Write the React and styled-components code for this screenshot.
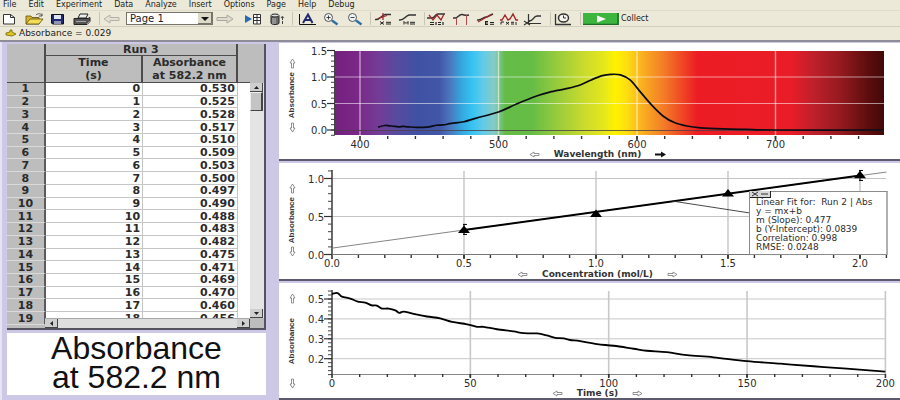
import { useState } from "react";
import styled, { createGlobalStyle } from "styled-components";

const GlobalStyle = createGlobalStyle`
  * {
    box-sizing: border-box;
  }
  body {
    margin: 0;
    background: #cdc8e6;
    color: #1c1c1c;
    font-family: "DejaVu Sans", Verdana, sans-serif;
  }
  button {
    padding: 0;
    border: 0;
    background: none;
    color: inherit;
    font: inherit;
  }
`;

const Page = styled.div`
  overflow: hidden;
`;

const MenuBar = styled.nav`
  display: flex;
  gap: 12px;
  height: 10px;
  padding-left: 3px;
  background: #ece9d8;
  font-size: 8px;
`;

const MenuItem = styled.button`
  height: 9px;
  line-height: 9px;
`;

const ToolBar = styled.div`
  display: flex;
  align-items: center;
  height: 17px;
  background: #ece9d8;
  border-top: 1px solid #dedbca;
  border-bottom: 1px solid #d2cfbf;
`;

const ToolButton = styled.button`
  width: 24px;
  height: 14px;

  svg {
    display: block;
  }
`;

const Separator = styled.span`
  width: 6px;
  height: 13px;
  background: linear-gradient(#c9c5b4, #c9c5b4) center / 1px 100% no-repeat;
`;

const PageSelect = styled.select`
  width: 87px;
  height: 13px;
  padding: 0 0 0 3px;
  border: 1px solid #77756b;
  border-radius: 0;
  background: #fff;
  color: #1c1c1c;
  font-family: inherit;
  font-size: 10px;
  line-height: 11px;
  appearance: none;
`;

const SelectWrap = styled.label`
  display: flex;
  position: relative;

  svg {
    position: absolute;
    top: 1px;
    right: 1px;
    pointer-events: none;
  }
`;

const Spacer = styled.span`
  width: 4px;
`;

const CollectButton = styled.button`
  display: flex;
  align-items: center;
  gap: 2px;
  font-size: 8px;
`;

const StatusBar = styled.div`
  display: flex;
  align-items: center;
  gap: 2px;
  height: 15px;
  padding: 0 5px 2px;
  background: #ece9d8;
  border-bottom: 2px solid #8e8c98;
  font-size: 9px;
  line-height: 12px;
`;

const Workspace = styled.main`
  display: grid;
  grid-template-columns: 31fr 69fr;
`;

const Side = styled.section`
  display: flex;
  flex-direction: column;
  gap: 3px;
  padding: 2px 13px 5px 5px;
  border-left: 2px solid #e6e3f3;
`;

const TableFrame = styled.div`
  display: grid;
  grid-template-columns: 1fr 14px;
  position: relative;
  height: 286px;
  overflow: hidden;
  background: #bdbdbd;
  border-right: 2px solid #55535f;
  border-bottom: 2px solid #55535f;
`;

const DataTable = styled.table`
  width: 100%;
  height: 281px;
  table-layout: fixed;
  border-collapse: separate;
  border-spacing: 0;
  font-size: 11px;
  font-weight: bold;
  line-height: 11px;
  color: #2b2b2b;
`;

const HeadCell = styled.th`
  padding: 0;
  border-right: ${(props) => (props.$open ? "0" : "2px solid #4c4c4c")};
  border-bottom: 1px solid #4c4c4c;
  line-height: ${(props) => (props.$tall ? 13 : 11)}px;
  vertical-align: middle;
`;

const RowHead = styled.th`
  padding: 0;
  border-right: 2px solid #5c5c5c;
  border-bottom: 1px solid #dadada;
`;

const Cell = styled.td`
  padding: 0 2px 0 0;
  background: #fff;
  border-right: 1px solid ${(props) => (props.$blank ? "#fff" : "#c6c6c6")};
  border-bottom: 1px solid ${(props) => (props.$blank ? "#fff" : "#c6c6c6")};
  text-align: right;
`;

const VerticalBar = styled.div`
  display: flex;
  flex-direction: column;
  margin: 39px 0 10px;
  background: #e4e4e4;
`;

const HorizontalBar = styled.div`
  display: flex;
  justify-content: space-between;
  position: absolute;
  right: 14px;
  bottom: 0;
  left: 38px;
  height: 10px;
  background: #dedede;
  border-top: 1px solid #a8a8a8;
`;

const ScrollButton = styled.button`
  display: grid;
  place-items: center;
  width: 13px;
  height: 9px;
  background: #cfcfcf;
  border-right: 1px solid #444;
  border-bottom: 1px solid #444;
`;

const Thumb = styled.div`
  width: 13px;
  height: 19px;
  margin-bottom: auto;
  background: #c4c4c4;
  border: 1px solid #efefef;
  border-right: 2px solid #444;
  border-bottom: 1px solid #444;
`;

const Readout = styled.div`
  padding: 1px 0 3px;
  background: #fff;
  color: #111;
  font-family: "Liberation Sans", Arial, sans-serif;
  font-size: 32px;
  line-height: 29px;
  text-align: center;
`;

const Charts = styled.section`
  display: flex;
  flex-direction: column;
  gap: 2px;
  padding-top: 1px;
`;

const ChartPanel = styled.figure`
  display: grid;
  grid-template-columns: 26px 1fr;
  position: relative;
  margin: 0;
  background: #fff;
  border-bottom: 2px solid #5d5a70;
`;

const YAxis = styled.div`
  display: flex;
  flex-direction: column;
  align-items: center;
  justify-content: space-between;
  grid-row: 1 / 3;
  padding: ${(props) => props.$top}px 0 ${(props) => props.$bottom}px;
`;

const YTitle = styled.span`
  color: #333;
  font-family: "Liberation Sans", Arial, sans-serif;
  font-size: 8px;
  font-weight: bold;
  line-height: 10px;
  writing-mode: vertical-rl;
  rotate: 180deg;
`;

const XTitle = styled.figcaption`
  display: flex;
  align-items: center;
  justify-content: center;
  gap: 14px;
  grid-column: 2;
  height: 10px;
  padding-right: 10px;
  color: #333;
  font-size: 9px;
  font-weight: bold;
  line-height: 10px;
`;

const ArrowButton = styled.button`
  display: block;

  svg {
    display: block;
    rotate: ${(props) => props.$turn || 0}deg;
  }
`;

const Plot = styled.svg`
  display: block;
  width: 100%;
  height: auto;
  overflow: visible;
  font-size: 10px;
  fill: #2c2c2c;
`;

const FitBox = styled.div`
  position: absolute;
  top: 28px;
  right: 12px;
  width: 139px;
  padding: 6px 0 2px 6px;
  background: #fff;
  border: 1px solid #8b8b8b;
  border-right: 2px solid #b0b0b0;
  color: #2c2c2c;
  font-size: 9px;
  line-height: 9px;
  white-space: pre;
`;

const FitButtons = styled.div`
  display: flex;
  position: absolute;
  top: -1px;
  left: 0;
  background: #d8d8d8;
  border-right: 1px solid #222;
  border-bottom: 1px solid #222;

  button {
    width: 10px;
    height: 6px;
  }
  svg {
    display: block;
  }
`;

const menus = ["File", "Edit", "Experiment", "Data", "Analyze", "Insert", "Options", "Page", "Help", "Debug"];

const absorbances = [
  "0.530", "0.525", "0.528", "0.517", "0.510", "0.509", "0.503", "0.500", "0.497", "0.490",
  "0.488", "0.483", "0.482", "0.475", "0.471", "0.469", "0.470", "0.460", "0.456",
];

const spectrum = [
  [413, 0.055], [418, 0.085], [423, 0.075], [428, 0.06], [431, 0.07], [435, 0.06], [441, 0.05],
  [450, 0.06], [455, 0.09], [460, 0.095], [466, 0.125], [475, 0.155], [484, 0.225], [500, 0.34],
  [513, 0.49], [528, 0.645], [537, 0.715], [550, 0.785], [559, 0.85], [567, 0.945], [575, 1.025],
  [581, 1.05], [588, 1.04], [595, 0.945], [603, 0.7], [611, 0.46], [619, 0.26], [627, 0.14],
  [636, 0.075], [646, 0.04], [662, 0.02], [679, 0.01], [700, 0], [778, 0],
];

const decay = [
  [0, 0.525], [2, 0.53], [3.6, 0.512], [6.6, 0.502], [9.3, 0.487], [12, 0.482], [14.4, 0.468],
  [16.2, 0.467], [18.1, 0.452], [20.5, 0.452], [22.9, 0.443], [24.3, 0.43], [25.9, 0.437],
  [29.5, 0.425], [34.3, 0.412], [39.1, 0.403], [43.4, 0.385], [48.8, 0.373], [52.4, 0.36],
  [54.8, 0.36], [59.6, 0.348], [65.6, 0.337], [69.3, 0.328], [74.1, 0.327], [77.7, 0.317],
  [80.7, 0.305], [83.7, 0.302], [86, 0.294], [89.7, 0.288], [95.8, 0.273], [101.8, 0.265],
  [109, 0.25], [113.8, 0.24], [121, 0.233], [128.3, 0.218], [137.9, 0.207], [150, 0.188],
  [162, 0.175], [174, 0.162], [186, 0.15], [200, 0.135],
];

// [offset %, colour] from 380 nm to 780 nm
const rainbow = [
  [0, "#74207f"], [4, "#7b2787"], [8, "#733c97"], [11, "#5a4a9f"], [15, "#3f51a4"], [19, "#4256a7"],
  [21, "#4b78bf"], [23, "#35a6df"], [25, "#35c3f2"], [27, "#62cae8"], [29, "#86cbc4"],
  [30, "#79c487"], [31, "#64bb46"], [36, "#66bd45"], [40, "#93ca3d"], [45, "#c6da2d"],
  [49, "#e6e71c"], [51, "#fff200"], [53, "#fde00f"], [56, "#f9b021"], [60, "#f37a26"],
  [64, "#ee3b24"], [66, "#ed1c24"], [83, "#e91d27"], [87, "#c0202b"], [92, "#961a20"],
  [97, "#5e0d0e"], [100, "#420808"],
];

// Catmull-Rom through every point
function curve(points) {
  let d = `M${points[0][0]} ${points[0][1]}`;
  for (let i = 0; i < points.length - 1; i++) {
    const p0 = points[i - 1] || points[i];
    const p1 = points[i];
    const p2 = points[i + 1];
    const p3 = points[i + 2] || p2;
    d += ` C${p1[0] + (p2[0] - p0[0]) / 6} ${p1[1] + (p2[1] - p0[1]) / 6}`;
    d += ` ${p2[0] - (p3[0] - p1[0]) / 6} ${p2[1] - (p3[1] - p1[1]) / 6} ${p2[0]} ${p2[1]}`;
  }
  return d;
}

function Arrow({ turn, solid, label }) {
  return (
    <ArrowButton $turn={turn} aria-label={label}>
      <svg width="11" height="7" viewBox="0 0 11 7">
        <path
          d={solid ? "M0 2.5h6V.5l5 3-5 3v-2H0z" : "M1 2.5h5V1l4 2.5L6 6V4.5H1z"}
          fill={solid ? "#111" : "#fff"}
          stroke={solid ? "none" : "#777"}
          strokeWidth="0.8"
        />
      </svg>
    </ArrowButton>
  );
}

function AxisY({ top, bottom }) {
  return (
    <YAxis $top={top} $bottom={bottom}>
      <Arrow turn={-90} label="Scale absorbance up" />
      <YTitle>Absorbance</YTitle>
      <Arrow turn={90} label="Scale absorbance down" />
    </YAxis>
  );
}

function AxisX({ title, solid }) {
  return (
    <XTitle>
      <Arrow turn={180} label={`Shrink ${title}`} />
      {title}
      <Arrow solid={solid} label={`Stretch ${title}`} />
    </XTitle>
  );
}

function Ticks({ x, y, left, base, xs, ys, minorX, minorY, digitsX, digitsY, labelY }) {
  return (
    <g>
      {minorX.map((v) => (
        <path key={v} d={`M${x(v)} ${base}v3`} stroke="#333" strokeWidth="1.4" />
      ))}
      {minorY.map((v) => (
        <path key={v} d={`M${left} ${y(v)}h-4`} stroke="#444" strokeWidth="1" />
      ))}
      {xs.map((v) => (
        <g key={v}>
          <path d={`M${x(v)} ${base}v4`} stroke="#333" strokeWidth="1.6" />
          <text x={x(v)} y={labelY} textAnchor="middle">{v.toFixed(digitsX)}</text>
        </g>
      ))}
      {ys.map((v) => (
        <g key={v}>
          <path d={`M${left} ${y(v)}h-8`} stroke="#333" strokeWidth="1.2" />
          <text x={left - 8} y={y(v) + 4} textAnchor="end">{v.toFixed(digitsY)}</text>
        </g>
      ))}
    </g>
  );
}

function range(from, to, step) {
  const out = [];
  for (let v = from; v <= to + step / 100; v += step) out.push(Number(v.toFixed(4)));
  return out;
}

function SpectrumChart() {
  const x = (v) => 55 + (v - 400) * 1.385;
  const y = (v) => 87 - v * 53;
  return (
    <ChartPanel>
      <AxisY top={17} bottom={28} />
      <Plot viewBox="0 0 595 106" role="img" aria-label="Absorbance against wavelength">
        <defs>
          <linearGradient id="rainbow">
            {rainbow.map(([at, color]) => (
              <stop key={at} offset={`${at}%`} stopColor={color} />
            ))}
          </linearGradient>
        </defs>
        <rect x="30" y="8" width="549" height="84" fill="url(#rainbow)" />
        <g stroke="#fff" strokeOpacity="0.55">
          {[400, 500, 600, 700].map((v) => (
            <path key={v} d={`M${x(v)} 8V92`} strokeWidth="1.4" />
          ))}
          {[0.5, 1].map((v) => (
            <path key={v} d={`M30 ${y(v)}H579`} />
          ))}
        </g>
        <path d="M30 87.500H579" stroke="#4d4048" strokeWidth="0.8" />
        <path d="M29.500 8V92" stroke="#444" />
        <Ticks
          x={x} y={y} left={30} base={93} labelY={105} digitsX={0} digitsY={1}
          xs={[400, 500, 600, 700]} ys={[0, 0.5, 1, 1.5]}
          minorX={range(420, 760, 20)} minorY={range(-0.1, 1.4, 0.1)}
        />
        <path d={curve(spectrum.map(([a, b]) => [x(a), y(b)]))} fill="none" stroke="#0b0b14" strokeWidth="1.7" />
      </Plot>
      <AxisX title="Wavelength (nm)" solid />
    </ChartPanel>
  );
}

function ConcentrationChart() {
  const x = (v) => 27 + v * 264;
  const y = (v) => 91.5 - v * 76;
  return (
    <ChartPanel>
      <AxisY top={22} bottom={24} />
      <Plot viewBox="0 0 595 106" role="img" aria-label="Absorbance against concentration">
        <g stroke="#c4c4c4">
          {[0.5, 1, 1.5, 2].map((v) => (
            <path key={v} d={`M${x(v)} 8V91`} strokeWidth="1.4" />
          ))}
          {[0.5, 1].map((v) => (
            <path key={v} d={`M27 ${y(v)}H581`} />
          ))}
        </g>
        <path d="M27 7V92" stroke="#444" strokeWidth="1.6" />
        <path d="M27 91.500H581" stroke="#777" />
        <Ticks
          x={x} y={y} left={27} base={92} labelY={104} digitsX={1} digitsY={1}
          xs={[0, 0.5, 1, 1.5, 2]} ys={[0, 0.5, 1]}
          minorX={range(0.1, 2.1, 0.1)} minorY={range(0.1, 1.1, 0.1)}
        />
        <path d={`M${x(0)} ${y(0.084)}L${x(2.1)} ${y(1.085)}`} stroke="#777" strokeWidth="0.9" />
        <path d={`M${x(0.5)} ${y(0.322)}L${x(2)} ${y(1.04)}`} stroke="#000" strokeWidth="2" />
        <path d="M367 38L445 50" stroke="#333" strokeWidth="0.9" />
        {[[0.5, 0.33], [1, 0.54], [1.5, 0.81], [2, 1.05]].map(([a, b]) => (
          <path key={a} d={`M${x(a)} ${y(b) - 4}l6 7.500h-12z`} fill="#000" />
        ))}
        {[[0.5, 0.33], [2, 1.04]].map(([a, b]) => (
          <path key={a} d={`M${x(a) - 1} ${y(b) - 5}h4m-3 0v10m-1 0h4`} stroke="#000" fill="none" />
        ))}
      </Plot>
      <AxisX title="Concentration (mol/L)" />
      <FitBox>
        <FitButtons>
          <button aria-label="Close fit box">
            <svg width="10" height="6" viewBox="0 0 10 6">
              <path d="M2 1l6 4M8 1L2 5" stroke="#333" />
            </svg>
          </button>
          <button aria-label="Collapse fit box">
            <svg width="10" height="6" viewBox="0 0 10 6">
              <path d="M1 3h7" stroke="#333" />
            </svg>
          </button>
        </FitButtons>
        <div>Linear Fit for:  Run 2 | Abs</div>
        <div>y = mx+b</div>
        <div>m (Slope): 0.477</div>
        <div>b (Y-Intercept): 0.0839</div>
        <div>Correlation: 0.998</div>
        <div>RMSE: 0.0248</div>
      </FitBox>
    </ChartPanel>
  );
}

function TimeChart() {
  const x = (v) => 27 + v * 2.767;
  const y = (v) => 16 + (0.5 - v) * 199;
  return (
    <ChartPanel>
      <AxisY top={12} bottom={11} />
      <Plot viewBox="0 0 595 105" role="img" aria-label="Absorbance against time">
        <g stroke="#c8c8c8">
          {[50, 100, 150, 200].map((v) => (
            <path key={v} d={`M${x(v)} 8V91`} strokeWidth="1.6" />
          ))}
          {[0.2, 0.3, 0.4, 0.5].map((v) => (
            <path key={v} d={`M27 ${y(v)}H581`} />
          ))}
        </g>
        <path d="M27 7V92" stroke="#444" strokeWidth="1.6" />
        <path d="M27 91.500H581" stroke="#888" />
        <Ticks
          x={x} y={y} left={27} base={91} labelY={104} digitsX={0} digitsY={1}
          xs={[0, 50, 100, 150, 200]} ys={[0.2, 0.3, 0.4, 0.5]}
          minorX={range(10, 190, 10)} minorY={range(0.12, 0.54, 0.02)}
        />
        <path d={curve(decay.map(([a, b]) => [x(a), y(b)]))} fill="none" stroke="#000" strokeWidth="1.8" />
      </Plot>
      <AxisX title="Time (s)" />
    </ChartPanel>
  );
}

// every toolbar drawing lives on a 24 x 14 canvas
const icons = {
  new: (
    <g stroke="#333">
      <path d="M3.500 2.500h7l4 3v6.500h-11z" fill="#fff" />
      <path d="M10.500 2.500v3h4" fill="none" />
    </g>
  ),
  open: (
    <g stroke="#5a4d12" strokeWidth="0.8">
      <path d="M2 12V4h5l1 1.500h7V12z" fill="#d8b52c" />
      <path d="M2 12l4-5h13l-4 5z" fill="#f4dc55" />
      <path d="M12 3c2-2 5-1.500 6 .5m0-2v2.500h-3" fill="none" stroke="#333" />
    </g>
  ),
  save: (
    <g>
      <path d="M3.500 2.500h12v9.500h-11l-1-1z" fill="#20286f" stroke="#111" />
      <path d="M6 3h7v4H6z" fill="#dfe3f3" />
      <path d="M6 9h7v3H6z" fill="#9095b5" />
    </g>
  ),
  print: (
    <g stroke="#222">
      <path d="M6 6l2-4h8l-2 4z" fill="#eee" />
      <path d="M2 6.500h14l2-1v4l-3 3H2z" fill="#555" />
      <path d="M4 9.500h10M15 12l3-3" stroke="#bbb" strokeWidth="0.8" />
    </g>
  ),
  back: <path d="M2 7l6-4v2.500h9v3H8V11z" fill="#e3e1d6" stroke="#b3b0a5" />,
  forward: <path d="M20 7l-6-4v2.500H4v3h10V11z" fill="#dedcd1" stroke="#aaa79c" />,
  table: (
    <g>
      <path d="M4 3l7 4-7 4z" fill="#2a6bb0" />
      <path d="M12.500 2.500h7v9.500h-7zM12.500 5.500h7M12.500 8.500h7M16 2.500v9.500" fill="#fff" stroke="#333" />
    </g>
  ),
  store: (
    <g>
      <path d="M6 4v7c0 2 8 2 8 0V4z" fill="#6d6d6d" stroke="#222" />
      <ellipse cx="10" cy="3.500" rx="4" ry="1.500" fill="#ddd" stroke="#222" />
      <path d="M8 6v6M10 6v6" stroke="#ccc" strokeWidth="0.8" />
      <path d="M17.500 12V4m-1.500 2l1.500-2L19 6" fill="none" stroke="#444" strokeDasharray="3 1" />
    </g>
  ),
  autoscale: (
    <g fill="none">
      <path d="M4.500 2v10.500H21" stroke="#111" />
      <path d="M8 11l5-8.500 4.500 8.500M9.500 8h6" stroke="#20286f" strokeWidth="2" />
    </g>
  ),
  zoomIn: (
    <g>
      <circle cx="9.500" cy="5.500" r="4" fill="#eef4f6" stroke="#555" />
      <path d="M7.500 5.500h4M9.500 3.500v4" stroke="#333" strokeWidth="0.9" />
      <path d="M13 8.500l5.500 4" stroke="#2f6fa3" strokeWidth="2.4" />
    </g>
  ),
  zoomOut: (
    <g>
      <circle cx="9.500" cy="5.500" r="4" fill="#eef4f6" stroke="#555" />
      <path d="M7.500 5.500h4" stroke="#333" strokeWidth="0.9" />
      <path d="M13 8.500l5.500 4" stroke="#2f6fa3" strokeWidth="2.4" />
    </g>
  ),
  examine: (
    <g fill="none">
      <path d="M2 7.500c5 1 6-4 10-5h6" stroke="#333" strokeWidth="1.500" />
      <path d="M5 6.500l9-3M10 1v7" stroke="#a3262b" strokeWidth="1.300" />
      <path d="M7 9.500l4 3M11 9.500l-4 3M13 10.300h5M13 12h5" stroke="#222" />
    </g>
  ),
  tangent: (
    <g fill="none">
      <path d="M2 8c5 1 6-4 10-5h7" stroke="#333" strokeWidth="1.500" />
      <path d="M7 12.500v-3l2 2 2-2v3M13 10.300h5M13 12h5" stroke="#222" />
    </g>
  ),
  stats: (
    <g fill="none">
      <path d="M0 6h5c3 0 3-4 6-4h7" stroke="#333" strokeWidth="1.500" />
      <path d="M2 3l4 5 4-5 4 5 3-6" stroke="#a3262b" strokeWidth="1.300" />
      <path d="M3 10.500h4M3 12.500h4M9 10v3M11 10.500h3M11 12.500h3M16 10v3" stroke="#222" strokeWidth="1.200" />
    </g>
  ),
  integral: (
    <g fill="none">
      <path d="M2 6h2c3 0 4-4 7-3.500s3 1.500 7 .5" stroke="#333" strokeWidth="1.500" />
      <path d="M5.500 6v7M15.500 3v10" stroke="#b8484c" />
    </g>
  ),
  fit: (
    <g fill="none">
      <path d="M2 8c5 1 7-4 10-3l6-3" stroke="#333" strokeWidth="1.500" />
      <path d="M3 10L17 2" stroke="#a3262b" strokeWidth="1.200" />
      <path d="M10 9.500h3M10 11h3M10 12.500h3M10.500 9.500v3M15 10.500h4M15 12.300h4" stroke="#222" />
    </g>
  ),
  model: (
    <g fill="none">
      <path d="M1 8h2l3-5 3 5 2-1 3-5 3 6h2" stroke="#a3262b" strokeWidth="1.400" />
      <path d="M2 12.500V10h3M7 10l3 2.500M10 10l-3 2.500M12 10.300h3M12 12h3M17 10v3" stroke="#222" />
    </g>
  ),
  manual: (
    <g fill="none" stroke="#333">
      <path d="M5.500 2v9.500H18M1 9l6 4M7 9l-6 4" strokeWidth="1.200" />
      <path d="M6 9c5 0 4-5 8-5h4" strokeWidth="1.400" />
    </g>
  ),
  clock: (
    <g fill="none" stroke="#333">
      <path d="M2.500 2v10.500H18" strokeWidth="1.300" />
      <ellipse cx="10.500" cy="6" rx="5" ry="4" strokeWidth="1.500" fill="#f6f5ee" />
      <path d="M10.500 3.500V6H13" />
    </g>
  ),
};

function Tool({ name, label }) {
  return (
    <ToolButton aria-label={label} title={label}>
      <svg width="24" height="14" viewBox="0 0 24 14">
        {icons[name]}
      </svg>
    </ToolButton>
  );
}

function ScrollArrow({ d, label }) {
  return (
    <ScrollButton aria-label={label}>
      <svg width="7" height="5" viewBox="0 0 7 5">
        <path d={d} fill="#222" />
      </svg>
    </ScrollButton>
  );
}

function Toolbar() {
  const [page, setPage] = useState("Page 1");
  return (
    <ToolBar>
      <Tool name="new" label="New" />
      <Tool name="open" label="Open" />
      <Tool name="save" label="Save" />
      <Tool name="print" label="Print" />
      <Separator />
      <Tool name="back" label="Previous page" />
      <SelectWrap>
        <PageSelect aria-label="Page" value={page} onChange={(e) => setPage(e.target.value)}>
          <option>Page 1</option>
        </PageSelect>
        <svg width="14" height="11" viewBox="0 0 14 11">
          <path d="M0 0h14v11H0z" fill="#dcd9c9" />
          <path d="M13.500 0v10.500H0" fill="none" stroke="#77756b" />
          <path d="M3 4h8L7 8z" fill="#111" />
        </svg>
      </SelectWrap>
      <Tool name="forward" label="Next page" />
      <Spacer />
      <Tool name="table" label="Data browser" />
      <Tool name="store" label="Store run" />
      <Separator />
      <Tool name="autoscale" label="Autoscale" />
      <Tool name="zoomIn" label="Zoom in" />
      <Tool name="zoomOut" label="Zoom out" />
      <Separator />
      <Tool name="examine" label="Examine" />
      <Tool name="tangent" label="Tangent" />
      <Separator />
      <Tool name="stats" label="Statistics" />
      <Tool name="integral" label="Integral" />
      <Tool name="fit" label="Linear fit" />
      <Tool name="model" label="Curve fit" />
      <Tool name="manual" label="Model" />
      <Separator />
      <Tool name="clock" label="Data collection" />
      <Separator />
      <CollectButton>
        <svg width="36" height="12" viewBox="0 0 36 12">
          <path d="M0 0h36v12H0z" fill="#3db53f" />
          <path d="M35 0v11.500H0" fill="none" stroke="#1f6b25" strokeWidth="1.500" />
          <path d="M14 2.500l9 3.500-9 3.500z" fill="#fff" />
        </svg>
        Collect
      </CollectButton>
    </ToolBar>
  );
}

function RunTable() {
  return (
    <TableFrame>
      <DataTable>
        <colgroup>
          <col width="16%" />
          <col width="40%" />
          <col width="39%" />
          <col />
        </colgroup>
        <thead>
          <tr>
            <HeadCell rowSpan={2} />
            <HeadCell colSpan={2}>Run 3</HeadCell>
            <HeadCell rowSpan={2} $open />
          </tr>
          <tr>
            <HeadCell $tall>
              Time
              <br />
              (s)
            </HeadCell>
            <HeadCell $tall>
              Absorbance
              <br />
              at 582.2 nm
            </HeadCell>
          </tr>
        </thead>
        <tbody>
          {absorbances.map((value, index) => (
            <tr key={index}>
              <RowHead scope="row">{index + 1}</RowHead>
              <Cell>{index}</Cell>
              <Cell>{value}</Cell>
              <Cell $blank />
            </tr>
          ))}
        </tbody>
      </DataTable>
      <VerticalBar>
        <ScrollArrow d="M1 4h5L3.500 1z" label="Scroll up" />
        <Thumb />
        <ScrollArrow d="M1 1h5L3.500 4z" label="Scroll down" />
      </VerticalBar>
      <HorizontalBar>
        <ScrollArrow d="M5 0v5L2 2.500z" label="Scroll left" />
        <ScrollArrow d="M2 0v5l3-2.500z" label="Scroll right" />
      </HorizontalBar>
    </TableFrame>
  );
}

function App() {
  return (
    <Page>
      <GlobalStyle />
      <MenuBar>
        {menus.map((item) => (
          <MenuItem key={item}>{item}</MenuItem>
        ))}
      </MenuBar>
      <Toolbar />
      <StatusBar>
        <svg width="12" height="8" viewBox="0 0 12 8">
          <path d="M1 4l4-1V1h2v2l4 2-4 2-6-1z" fill="#e0c61c" stroke="#6f6212" strokeWidth="0.8" />
        </svg>
        Absorbance = 0.029
      </StatusBar>
      <Workspace>
        <Side>
          <RunTable />
          <Readout>
            Absorbance
            <br />
            at 582.2 nm
          </Readout>
        </Side>
        <Charts>
          <SpectrumChart />
          <ConcentrationChart />
          <TimeChart />
        </Charts>
      </Workspace>
    </Page>
  );
}

export default App;
